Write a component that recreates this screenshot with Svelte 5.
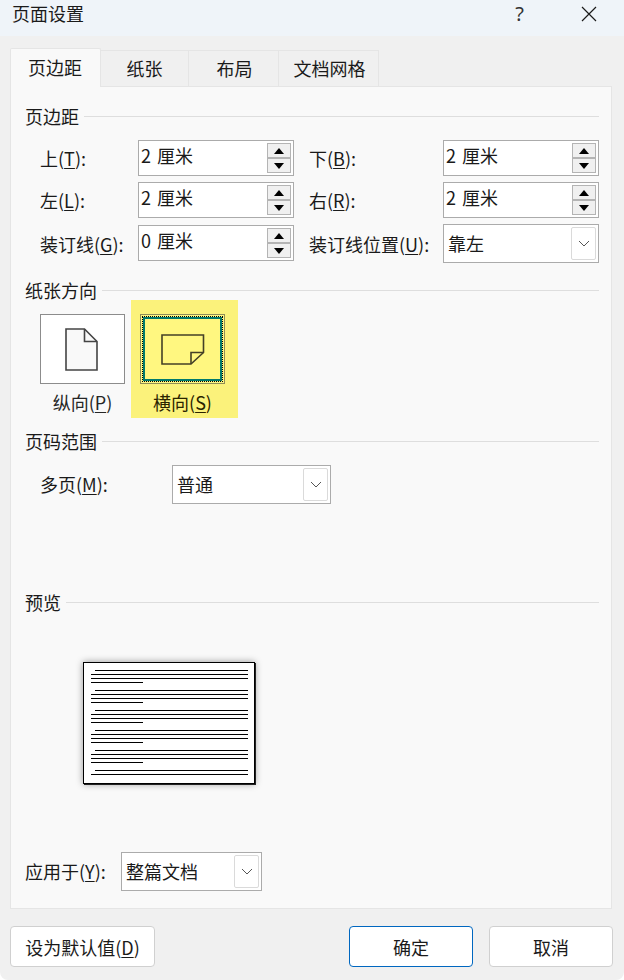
<script lang="ts">
	const tabs = ['页边距', '纸张', '布局', '文档网格'];

	// preview sheet: five full paragraphs and a cut-off one
	const paragraphs = [4, 4, 4, 4, 4, 2];
</script>

{#snippet spinner(value: string)}
	<div class="spinner">
		<span class="value">{value}</span>
		<div class="spin-buttons">
			<button class="spin" aria-label="up">
				<svg width="12" height="8" viewBox="0 0 12 8"><path d="M6 1 L11 7 H1 Z" fill="#000" /></svg>
			</button>
			<button class="spin" aria-label="down">
				<svg width="12" height="8" viewBox="0 0 12 8"><path d="M1 1 H11 L6 7 Z" fill="#000" /></svg>
			</button>
		</div>
	</div>
{/snippet}

{#snippet combo(value: string, width: string)}
	<div class="combo {width}">
		<span class="combo-value">{value}</span>
		<span class="combo-arrow">
			<svg width="12" height="8" viewBox="0 0 12 8"><path d="M1 1 L6 6 L11 1" fill="none" stroke="#555" stroke-width="1" /></svg>
		</span>
	</div>
{/snippet}

{#snippet heading(text: string)}
	<div class="heading">
		<span>{text}</span>
		<i></i>
	</div>
{/snippet}

<div class="dialog">
	<header class="titlebar">
		<span class="title">页面设置</span>
		<span class="help">?</span>
		<svg class="close" width="16" height="16" viewBox="0 0 16 16">
			<path d="M1 1 L15 15 M15 1 L1 15" stroke="#1a1a1a" stroke-width="1.2" fill="none" />
		</svg>
	</header>

	<main class="body">
		<div class="tabs">
			{#each tabs as tab, i}
				<div class="tab tab-{i}" class:active={i === 0}>{tab}</div>
			{/each}
		</div>

		<section class="panel">
			{@render heading('页边距')}
			<div class="margins">
				<label>上(<u>T</u>):</label>
				{@render spinner('2 厘米')}
				<span></span>
				<label>下(<u>B</u>):</label>
				{@render spinner('2 厘米')}

				<label>左(<u>L</u>):</label>
				{@render spinner('2 厘米')}
				<span></span>
				<label>右(<u>R</u>):</label>
				{@render spinner('2 厘米')}

				<label>装订线(<u>G</u>):</label>
				<div class="nudge">{@render spinner('0 厘米')}</div>
				<span></span>
				<label>装订线位置(<u>U</u>):</label>
				{@render combo('靠左', 'full')}
			</div>

			<div class="gap-orient">{@render heading('纸张方向')}</div>
			<div class="orient">
				<div class="orient-item portrait">
					<div class="orient-btn">
						<svg class="page" width="33" height="43" viewBox="0 0 33 43">
							<path d="M1 1 H19.5 L32 13.5 V42 H1 Z" fill="#f9f9f9" stroke="#444" stroke-width="1.6" />
							<path d="M19.5 1 V13.5 H32" fill="none" stroke="#444" stroke-width="1.6" />
						</svg>
					</div>
					<span class="orient-label">纵向(<u>P</u>)</span>
				</div>
				<div class="orient-item landscape">
					<div class="orient-btn selected">
						<div class="dots">
							<div class="teal">
								<svg width="44" height="31" viewBox="0 0 44 31">
									<path d="M1 1 H42.5 V18.5 L30 30 H1 Z" fill="none" stroke="#444026" stroke-width="1.6" />
									<path d="M42.5 18.5 H30 V30" fill="none" stroke="#444026" stroke-width="1.6" />
								</svg>
							</div>
						</div>
					</div>
					<span class="orient-label">横向(<u>S</u>)</span>
				</div>
			</div>

			<div class="gap-pages">{@render heading('页码范围')}</div>
			<div class="pages">
				<label>多页(<u>M</u>):</label>
				{@render combo('普通', 'pages-combo')}
			</div>

			<div class="gap-preview">{@render heading('预览')}</div>
			<div class="sheet">
				{#each paragraphs as count}
					<div class="para">
						{#each { length: count } as _, l}
							<div class="line" class:indent={l === 0} class:short={l === 3}></div>
						{/each}
					</div>
				{/each}
			</div>

			<div class="apply">
				<label>应用于(<u>Y</u>):</label>
				{@render combo('整篇文档', 'apply-combo')}
			</div>
		</section>

		<footer class="footer">
			<button class="btn default">设为默认值(<u>D</u>)</button>
			<div class="actions">
				<button class="btn action primary">确定</button>
				<button class="btn action">取消</button>
			</div>
		</footer>
	</main>
</div>

<style>
	:global(body) {
		margin: 0;
		background: #fff;
	}

	.dialog {
		width: 624px;
		height: 980px;
		display: flex;
		flex-direction: column;
		background: #f0f0f0;
		border-radius: 0 0 8px 8px;
		overflow: hidden;
		font-family: 'Noto Sans CJK SC', 'Noto Sans', sans-serif;
		font-size: 18px;
		color: #1a1a1a;
	}

	u {
		text-underline-offset: 2px;
		text-decoration-thickness: 1px;
	}

	.titlebar {
		height: 36px;
		flex-shrink: 0;
		display: flex;
		align-items: flex-start;
		background: #eff4f9;
		padding-left: 12px;
		box-sizing: border-box;
	}

	.title {
		line-height: 27px;
	}

	.help {
		margin-left: auto;
		margin-right: 57px;
		font-size: 20px;
		line-height: 28px;
		font-family: 'Noto Sans', sans-serif;
		color: #333;
	}

	.close {
		margin: 6px 27px 0 0;
	}

	.body {
		flex: 1;
		display: flex;
		flex-direction: column;
		padding: 12px 11px 0 10px;
	}

	.tabs {
		display: flex;
		align-items: flex-end;
		height: 38px;
	}

	.tab {
		height: 36px;
		box-sizing: border-box;
		display: flex;
		align-items: center;
		justify-content: center;
		background: #f0f0f0;
		border: 1px solid #e5e5e5;
		border-left: 0;
		border-bottom: 0;
		padding-bottom: 2px;
	}

	.tab-0 { width: 91px; padding-right: 1px; }
	.tab-1 { width: 88px; }
	.tab-2 { width: 90px; padding-left: 2px; }
	.tab-3 { width: 100px; padding-left: 2px; }

	.tab.active {
		height: 39px;
		margin-bottom: -1px;
		background: #f9f9f9;
		border-left: 1px solid #e5e5e5;
		position: relative;
		z-index: 1;
		border-radius: 2px 2px 0 0;
	}

	.panel {
		height: 823px;
		width: 602px;
		box-sizing: border-box;
		background: #f9f9f9;
		border: 1px solid #e5e5e5;
		padding: 17px 12px 0 14px;
	}

	.heading {
		height: 24px;
		display: flex;
		align-items: center;
		gap: 5px;
		line-height: 24px;
	}

	.heading i {
		flex: 1;
		height: 1px;
		background: #dedede;
	}

	.margins {
		margin-top: 12px;
		padding-left: 15px;
		display: grid;
		grid-template-columns: 98px 156px 15px 134px 156px;
		grid-template-rows: 36px 36px 39px;
		row-gap: 6px;
	}

	label {
		display: flex;
		align-items: center;
		white-space: pre;
		height: 38px;
	}

	.margins label {
		height: auto;
	}

	.nudge {
		margin-top: 1px;
	}

	.spinner {
		width: 156px;
		height: 36px;
		box-sizing: border-box;
		display: flex;
		justify-content: space-between;
		background: #fff;
		border: 1px solid #ababab;
	}

	.value {
		padding-left: 2px;
		line-height: 28px;
		word-spacing: 2px;
	}

	.spin-buttons {
		display: flex;
		flex-direction: column;
		margin: 2px 2px 0 0;
	}

	.spin {
		width: 24px;
		height: 15px;
		padding: 0;
		box-sizing: border-box;
		display: flex;
		align-items: center;
		justify-content: center;
		background: #f0f0f0;
		border: 1px solid #b4b4b4;
	}

	.combo {
		height: 39px;
		box-sizing: border-box;
		display: flex;
		justify-content: space-between;
		background: #fff;
		border: 1px solid #ababab;
	}

	.combo.full { width: 156px; }
	.combo.pages-combo { width: 159px; }
	.combo.apply-combo { width: 141px; }

	.combo-value {
		padding-left: 4px;
		line-height: 36px;
	}

	.combo-arrow {
		width: 25px;
		margin: 2px 2px 2px 0;
		box-sizing: border-box;
		display: flex;
		align-items: center;
		justify-content: center;
		background: #fff;
		border: 1px solid #dadada;
		border-radius: 2px;
	}

	.gap-orient {
		margin-top: 15px;
	}

	.orient {
		margin-top: -2px;
		height: 118px;
		display: flex;
		padding-left: 15px;
	}

	.orient-item {
		display: flex;
		flex-direction: column;
		align-items: center;
		box-sizing: border-box;
	}

	.orient-item.portrait {
		width: 85px;
		padding-top: 14px;
		margin-right: 6px;
	}

	.orient-item.landscape {
		width: 107px;
		padding: 14px 13px 0 9px;
		background: #fbf27b;
	}

	.orient-btn {
		width: 85px;
		height: 70px;
		box-sizing: border-box;
		display: flex;
		align-items: center;
		justify-content: center;
		flex-shrink: 0;
		background: #fff;
		border: 1px solid #8c8c8c;
	}

	.page {
		margin-right: 3px;
	}

	.orient-btn.selected {
		background: #fff780;
		border-color: #908d57;
		padding: 1px;
	}

	.dots {
		width: 100%;
		height: 100%;
		box-sizing: border-box;
		border: 1px dotted #000;
	}

	.teal {
		height: 100%;
		box-sizing: border-box;
		display: flex;
		align-items: center;
		justify-content: center;
		border: 2px solid #007a6c;
	}

	.orient-label {
		margin-top: 5px;
		line-height: 26px;
		white-space: nowrap;
		color: #262626;
	}

	.landscape .orient-label {
		color: #2a2300;
	}

	.gap-pages {
		margin-top: 11px;
	}

	.pages {
		margin-top: 12px;
		padding-left: 15px;
		display: flex;
	}

	.pages label {
		width: 132px;
	}

	.gap-preview {
		margin-top: 86px;
	}

	.sheet {
		width: 172px;
		height: 122px;
		box-sizing: border-box;
		margin: 48px 0 0 58px;
		padding: 7px 6px 0 7px;
		display: flex;
		flex-direction: column;
		gap: 7px;
		overflow: hidden;
		background: #fff;
		border: 1px solid #000;
		box-shadow: 1px 1px 0 #222, 0 0 7px rgba(0, 0, 0, 0.4);
	}

	.para {
		display: flex;
		flex-direction: column;
		gap: 3px;
	}

	.line {
		height: 1px;
		flex-shrink: 0;
		background: #000;
	}

	.line.indent {
		margin-left: 4px;
	}

	.line.short {
		width: 52px;
	}

	.apply {
		margin-top: 68px;
		display: flex;
	}

	.apply label {
		width: 96px;
	}

	.footer {
		margin-top: 17px;
		display: flex;
		justify-content: space-between;
	}

	.actions {
		display: flex;
		gap: 16px;
	}

	.btn {
		height: 41px;
		padding: 0;
		box-sizing: border-box;
		font: inherit;
		color: inherit;
		background: #fff;
		border: 1px solid #d0d0d0;
		border-radius: 4px;
	}

	.btn.default {
		width: 145px;
	}

	.btn.action {
		width: 124px;
	}

	.btn.primary {
		border-color: #0067c0;
	}
</style>
